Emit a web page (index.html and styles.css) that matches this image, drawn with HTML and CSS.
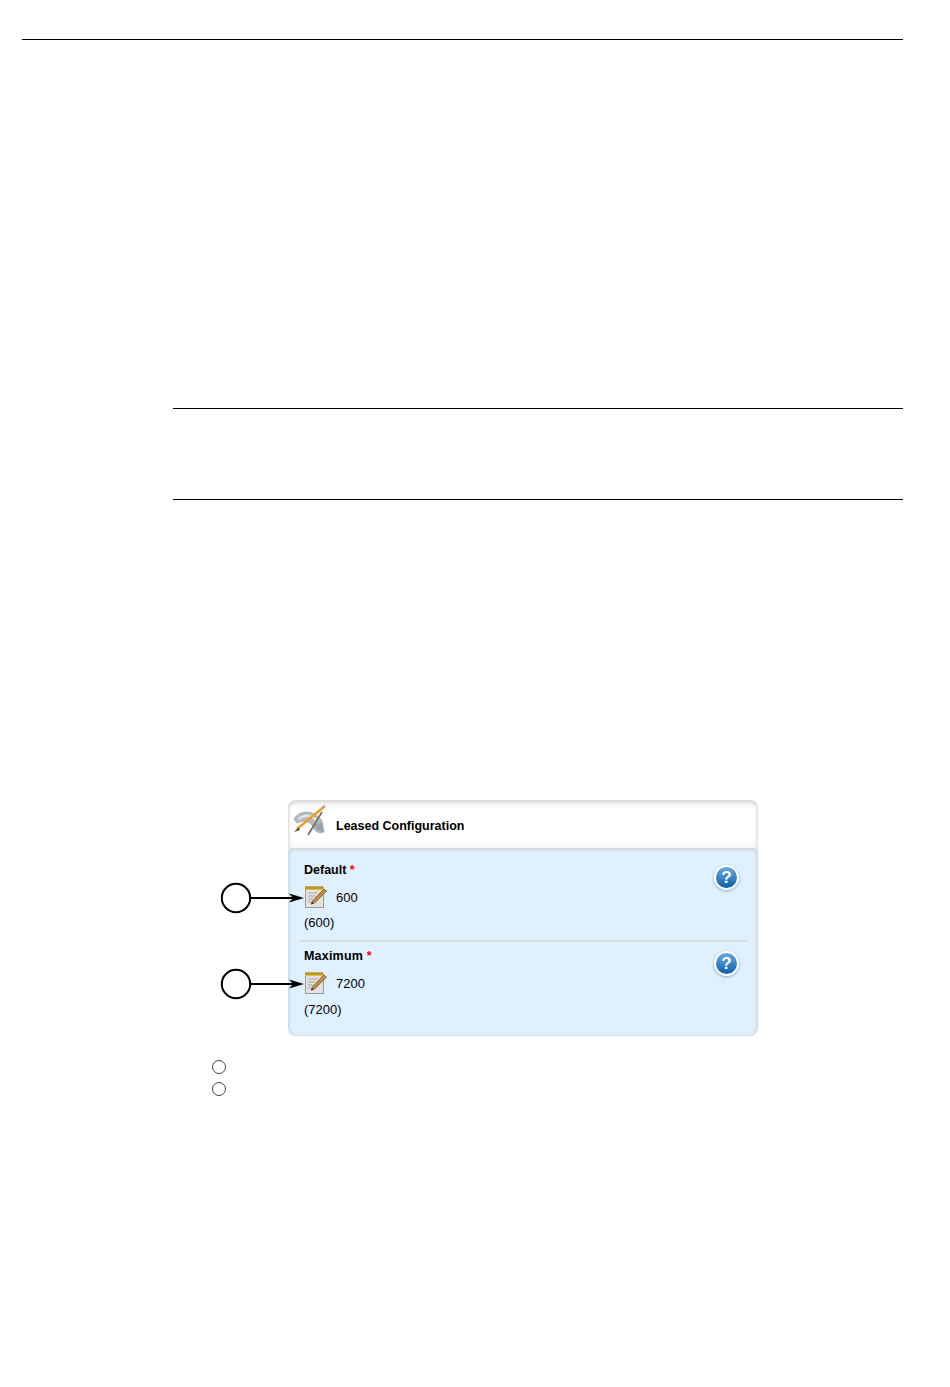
FILE: index.html
```html
<!doctype html>
<html>
<head>
    <meta charset="utf-8" />
    <title>Leased Configuration</title>
    <link rel="stylesheet" href="styles.css">
</head>

<body>
    <div class="page">
        <div class="head-rule"></div>
        <div class="note"></div>

        <div class="figure">
            <!-- callouts -->
            <svg class="callouts" width="90" height="120" viewBox="0 0 90 120">
                <circle cx="16" cy="16" r="14.200" fill="#fff" stroke="#000" stroke-width="2" />
                <path d="M30 16H75" stroke="#000" stroke-width="2" />
                <path d="M84 16L69 11.500L73 16L69 20.500Z" fill="#000" />
                <circle cx="16" cy="102" r="14.200" fill="#fff" stroke="#000" stroke-width="2" />
                <path d="M30 102H75" stroke="#000" stroke-width="2" />
                <path d="M84 102L69 97.500L73 102L69 106.500Z" fill="#000" />
            </svg>

            <div class="panel">
                <div class="panel-head">
                    <svg class="tools-icon" width="34" height="32" viewBox="0 0 34 32">
                        <path d="M2 15C8 5 23 6 30 17L32 28C28 30 24 28 22 25C20 18 13 15 5 19Z" fill="#b4bec4" stroke="#98a3aa" stroke-width=".8" />
                        <path d="M7 15C12 10 20 11 25 17" fill="none" stroke="#e6eaec" stroke-width="2" />
                        <path d="M22 20L30 19L31 28L25 26Z" fill="#98a4ac" />
                        <path d="M30 8L16 31" stroke="#7b7064" stroke-width="1.800" />
                        <path d="M33 2L5 25" stroke="#ee9d2a" stroke-width="2.600" />
                        <path d="M33 2L28 6" stroke="#d9a070" stroke-width="2" />
                        <path d="M6.500 23.500L2 28L8 26Z" fill="#4e4438" />
                    </svg>
                    <span class="panel-title">Leased Configuration</span>
                </div>
                <div class="panel-body">
                    <div class="field">
                        <div class="field-main">
                            <div class="field-label">Default <span class="req">*</span></div>
                            <div class="field-value">
                                <svg class="note-icon" width="24" height="24" viewBox="0 0 24 24">
                                    <use href="#notepad" />
                                </svg>
                                <span>600</span>
                            </div>
                            <div class="field-hint">(600)</div>
                        </div>
                        <div class="help">?</div>
                    </div>
                    <div class="field">
                        <div class="field-main">
                            <div class="field-label">Maximum <span class="req">*</span></div>
                            <div class="field-value">
                                <svg class="note-icon" width="24" height="24" viewBox="0 0 24 24">
                                    <use href="#notepad" />
                                </svg>
                                <span>7200</span>
                            </div>
                            <div class="field-hint">(7200)</div>
                        </div>
                        <div class="help">?</div>
                    </div>
                </div>
            </div>
        </div>

        <div class="legend">
            <div class="legend-dot"></div>
            <div class="legend-dot"></div>
        </div>
    </div>

    <svg width="0" height="0" class="defs">
        <defs>
            <g id="notepad">
                <rect x="1.500" y="3.500" width="18" height="19" fill="#e2e2de" stroke="#9a9a96" />
                <rect x="1" y="2" width="19" height="3" fill="#e8c23a" />
                <path d="M2 1V4M4 1V4M6 1V4M8 1V4M10 1V4M12 1V4M14 1V4M16 1V4M18 1V4" stroke="#8a6d10" stroke-width="1" />
                <path d="M4 8H14M4 11H12M4 14H9M4 17H8" stroke="#a8a8a4" />
                <path d="M20 4L22.500 6L10.500 18L7.500 19L8.500 16Z" fill="#c98f3c" stroke="#6e4a20" stroke-width=".8" />
                <path d="M7 19.500L8 17L9.500 18.500Z" fill="#222" />
            </g>
        </defs>
    </svg>
</body>

</html>
```

FILE: styles.css
```css
html, body {
    background-color: #fff;
}
body {
    margin: 0;
    color: #000;
    font-family: 'Liberation Sans', Arial, sans-serif;
}

.page {
    padding: 39px 47px 0 22px;
}
.head-rule {
    border-top: 1px solid #000;
}
.note {
    margin: 368px 0 0 151px;
    height: 90px;
    border-top: 1px solid #000;
    border-bottom: 1px solid #000;
}
.defs {
    position: absolute;
}

/* figure */
.figure {
    position: relative;
    width: 470px;
    margin: 300px 0 0 266px;
}
.callouts {
    position: absolute;
    left: -68px;
    top: 82px;
    z-index: 1;
}

.panel {
    height: 236px;
    display: flex;
    flex-direction: column;
    border-radius: 8px;
    overflow: hidden;
    background: #e6e9eb;
}
.panel-head {
    height: 49px;
    flex-shrink: 0;
    display: flex;
    align-items: center;
    box-sizing: border-box;
    padding-left: 4px;
    border-radius: 8px 8px 0 0;
    background: linear-gradient(#f6f6f4, #fff 12px, #fff 38px, #f6f6f6);
    box-shadow: inset 0 4px 3px -1px #dcdcdc, inset 3px 0 2px -1px #e6e6e6, inset -3px 0 2px -1px #e6e6e6;
}
.tools-icon {
    margin: 0 10px 10px 0;
}
.panel-title {
    margin-top: 2px;
    font-size: 12.500px;
    font-weight: bold;
}
.panel-body {
    flex-grow: 1;
    padding: 3px 11px 0;
    border-radius: 6px 6px 8px 8px;
    background-color: #dff1fe;
    margin-top: -1px;
    box-shadow: inset 0 3px 3px -1px #d2d4d5, inset 4px 0 3px -2px #cfdce6, inset -4px 0 3px -2px #cfdce6, inset 0 -2px 1px -1px #d6dde2;
}

.field {
    display: flex;
    justify-content: space-between;
    height: 89px;
    box-sizing: border-box;
    padding: 11px 8px 0 5px;
}
.field + .field {
    height: 86px;
    border-top: 2px solid #dcdedf;
    padding-top: 6px;
}
.field-label {
    font-size: 12.500px;
    font-weight: bold;
    line-height: 16px;
}
.field + .field .field-label {
    letter-spacing: 0.2px;
}
.req {
    color: #f00;
}
.field-value {
    display: flex;
    align-items: center;
    gap: 8px;
    margin-top: 7px;
    height: 24px;
    font-size: 13px;
}
.field-hint {
    margin-top: 6px;
    font-size: 13px;
    line-height: 16px;
}
.field + .field .field-hint {
    margin-top: 7px;
}

.help {
    width: 21px;
    height: 21px;
    margin-top: 3px;
    border: 2px solid #fff;
    border-radius: 50%;
    background: linear-gradient(#6aa6dc, #3f8bcc 45%, #0e5ea6);
    box-shadow: 0 1px 3px #8aa4b8;
    color: #fff;
    font-size: 17px;
    font-weight: bold;
    line-height: 21px;
    text-align: center;
}
.field + .field .help {
    margin-top: 3px;
}

/* legend markers under the figure */
.legend {
    display: flex;
    flex-direction: column;
    gap: 8px;
    margin: 24px 0 0 190px;
}
.legend-dot {
    width: 12px;
    height: 12px;
    border: 1px solid #444;
    border-radius: 50%;
}
```
